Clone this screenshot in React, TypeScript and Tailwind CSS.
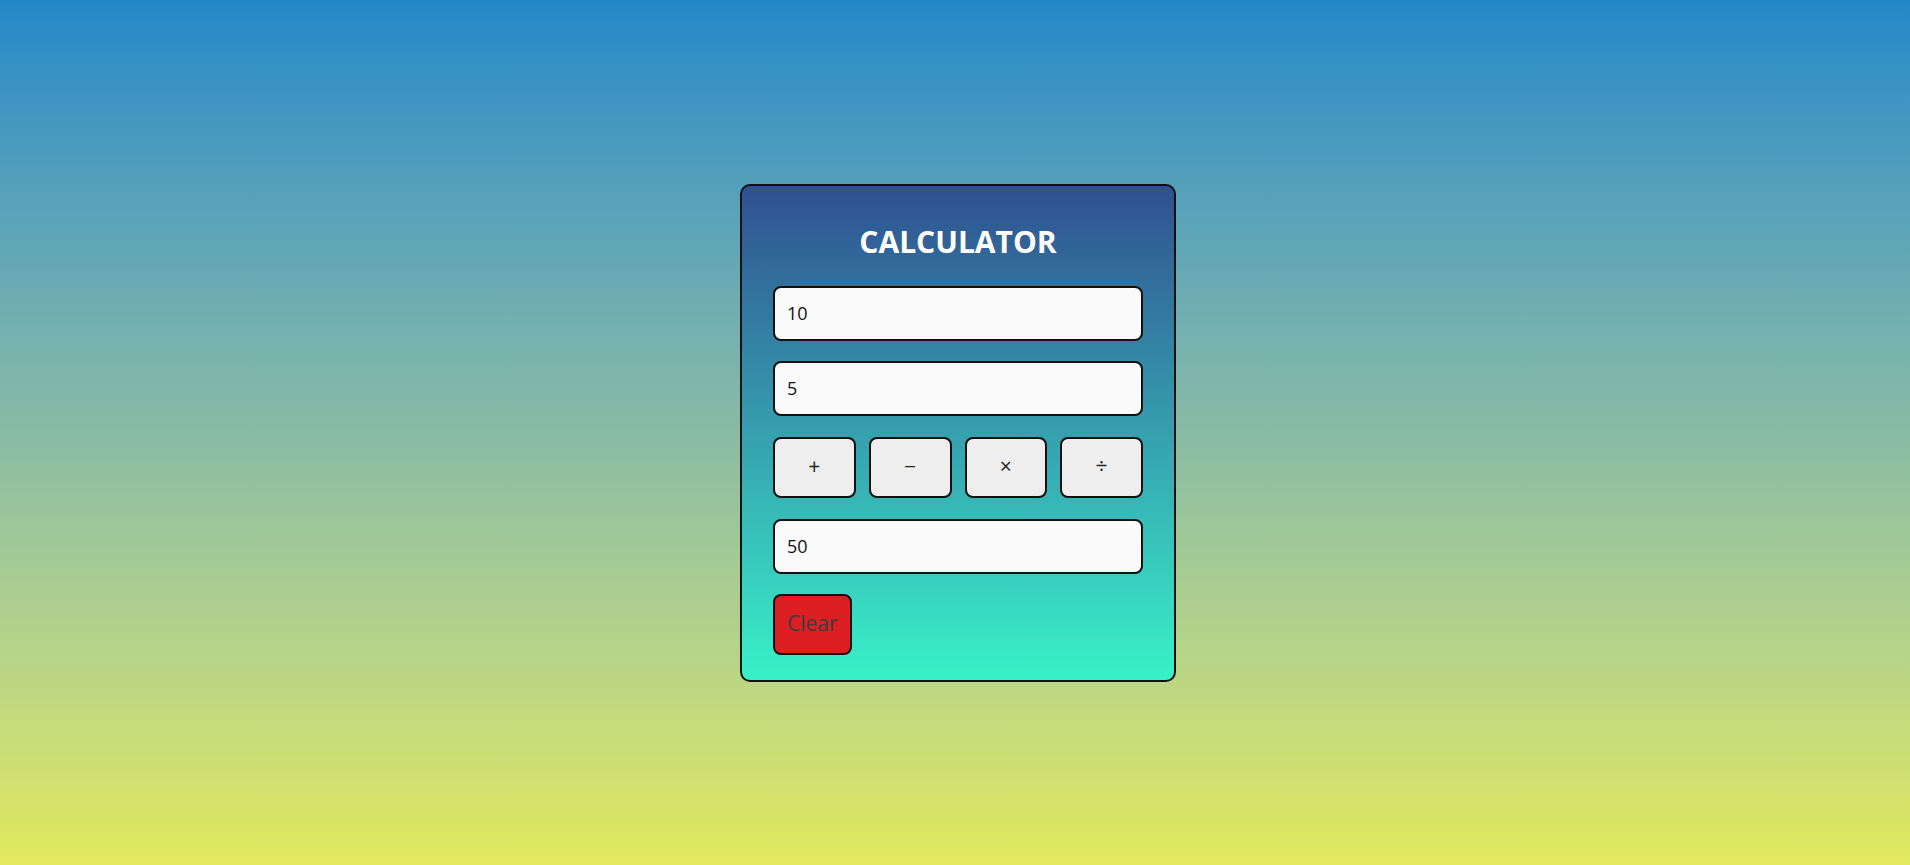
import { useState } from "react";

const OPS = [
	{ label: "+", fn: (a: number, b: number) => a + b },
	{ label: "−", fn: (a: number, b: number) => a - b },
	{ label: "×", fn: (a: number, b: number) => a * b },
	{ label: "÷", fn: (a: number, b: number) => a / b },
];

export default function App() {
	const [first, setFirst] = useState("10");
	const [second, setSecond] = useState("5");
	const [result, setResult] = useState("50");

	const inputClass =
		"block w-full h-[55px] rounded-lg border-2 border-[#111] bg-[#fafafa] px-3 text-[18px] text-[#111] outline-none";

	return (
		<div className="min-h-screen flex items-center justify-center bg-linear-to-b from-[#2188c9] to-[#e2e95a] font-['Open_Sans','Noto_Sans',sans-serif]">
			{/* Card */}
			<div className="ml-[6px] w-[436px] rounded-[10px] border-2 border-[#111] bg-linear-to-b from-[#2f5090] to-[#38f2c8] px-[31px] pt-[36px] pb-[25px]">
				<h1 className="h-10 text-center text-[30px] leading-10 font-bold text-white">
					CALCULATOR
				</h1>

				<input
					className={`${inputClass} mt-[24px]`}
					value={first}
					onChange={(e) => setFirst(e.target.value)}
				/>
				<input
					className={`${inputClass} mt-5`}
					value={second}
					onChange={(e) => setSecond(e.target.value)}
				/>

				<div className="mt-[21px] grid grid-cols-4 gap-[13px]">
					{OPS.map((op) => (
						<button
							key={op.label}
							type="button"
							onClick={() =>
								setResult(String(op.fn(Number(first), Number(second))))
							}
							className="h-[61px] rounded-lg border-2 border-[#111] bg-[#eeeeee] text-[21px] text-[#222]"
						>
							{op.label}
						</button>
					))}
				</div>

				<input
					className={`${inputClass} mt-[21px]`}
					value={result}
					readOnly
				/>

				<button
					type="button"
					onClick={() => {
						setFirst("");
						setSecond("");
						setResult("");
					}}
					className="mt-5 block h-[61px] rounded-lg border-2 border-[#111] bg-[#dc1f22] px-3 text-[21px] text-[#3d3d3d]"
				>
					Clear
				</button>
			</div>
		</div>
	);
}
